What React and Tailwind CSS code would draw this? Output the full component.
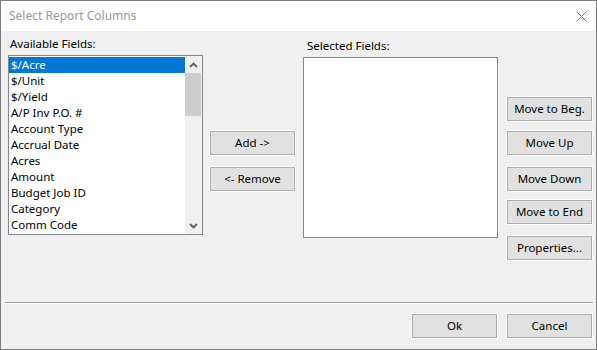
import React from "react";

const fields = [
  "$/Acre",
  "$/Unit",
  "$/Yield",
  "A/P Inv P.O. #",
  "Account Type",
  "Accrual Date",
  "Acres",
  "Amount",
  "Budget Job ID",
  "Category",
  "Comm Code",
];

function WinButton({ children, className = "" }) {
  return (
    <button
      className={`h-[24px] w-[85px] bg-[#e1e1e1] border border-[#adadad] shadow-[0_0_0_1px_#ffffff] text-black text-[11.5px] leading-none flex items-center justify-center ${className}`}
    >
      {children}
    </button>
  );
}

function Chevron({ up }) {
  return (
    <svg width="9" height="6" viewBox="0 0 9 6">
      <path
        d={up ? "M1 5 L4.5 1.5 L8 5" : "M1 1 L4.5 4.5 L8 1"}
        fill="none"
        stroke="#606060"
        strokeWidth="1.8"
      />
    </svg>
  );
}

export default function App() {
  return (
    <div className="w-[597px] h-[350px] border border-[#7e7e7e] bg-[#f0f0f0] flex flex-col font-['Noto_Sans',sans-serif] text-[11.5px] text-black">
      {/* title bar */}
      <div className="h-[30px] bg-white flex items-center justify-between pl-[8px] pr-[9px]">
        <span className="text-[#9a9a9a] text-[12px]">Select Report Columns</span>
        <svg width="11" height="11" viewBox="0 0 11 11">
          <path d="M0.5 0.5 L10.5 10.5 M10.5 0.5 L0.5 10.5" stroke="#7a7a7a" strokeWidth="1" />
        </svg>
      </div>

      <div className="h-[271px] flex pl-[7px]">
        {/* available fields */}
        <div className="flex flex-col pt-[5px] w-[195px]">
          <div className="h-[16px] leading-[16px] pl-[2px] mb-[3px]">Available Fields:</div>
          <div className="h-[180px] border border-[#828790] bg-white flex">
            <div className="flex-1 pt-[1px]">
              {fields.map((f, i) => (
                <div
                  key={f}
                  className={`h-[16px] leading-[16px] pl-[2px] whitespace-nowrap ${
                    i === 0 ? "bg-[#0078d7] text-white" : ""
                  }`}
                >
                  {f}
                </div>
              ))}
            </div>
            <div className="w-[17px] bg-[#f0f0f0] flex flex-col">
              <div className="h-[17px] flex items-center justify-center">
                <Chevron up />
              </div>
              <div className="h-[43px] w-[16px] bg-[#cdcdcd]" />
              <div className="flex-1" />
              <div className="h-[17px] flex items-center justify-center">
                <Chevron />
              </div>
            </div>
          </div>
        </div>

        {/* add / remove */}
        <div className="flex flex-col ml-[7px] pt-[100px] gap-[12px]">
          <WinButton>Add -&gt;</WinButton>
          <WinButton>&lt;- Remove</WinButton>
        </div>

        {/* selected fields */}
        <div className="flex flex-col ml-[8px] pt-[7px] w-[195px]">
          <div className="h-[16px] leading-[16px] pl-[4px] mb-[3px]">Selected Fields:</div>
          <div className="h-[181px] border border-[#828790] bg-white" />
        </div>

        {/* ordering buttons */}
        <div className="flex flex-col ml-[9px] pt-[66px]">
          <WinButton>Move to Beg.</WinButton>
          <WinButton className="mt-[10px]">Move Up</WinButton>
          <WinButton className="mt-[12px]">Move Down</WinButton>
          <WinButton className="mt-[9px]">Move to End</WinButton>
          <WinButton className="mt-[12px]">Properties...</WinButton>
        </div>
      </div>

      <div className="ml-[4px] mr-[3px] border-t border-t-[#a0a0a0] border-b border-b-white" />

      <div className="flex justify-end gap-[10px] pt-[10px] pr-[4px]">
        <WinButton>Ok</WinButton>
        <WinButton>Cancel</WinButton>
      </div>
    </div>
  );
}
